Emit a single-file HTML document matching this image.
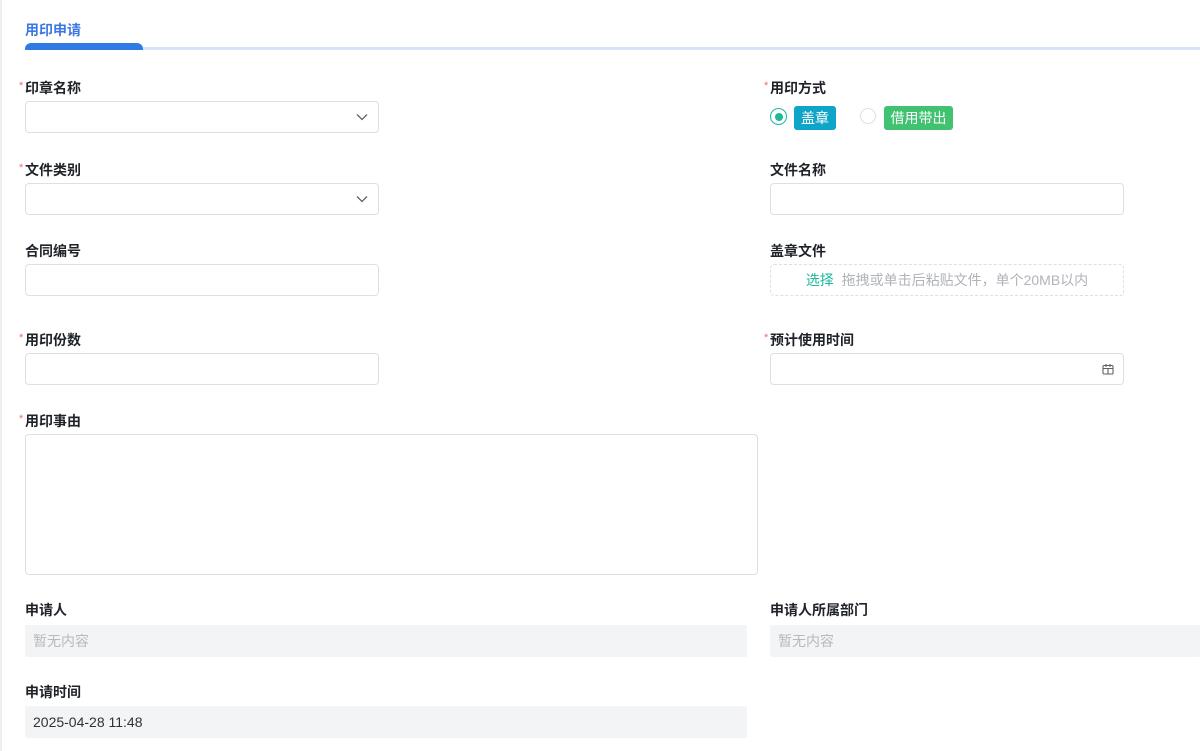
<!DOCTYPE html>
<html><head><meta charset="utf-8"><style>
*{box-sizing:border-box;margin:0;padding:0}
body{width:1200px;height:751px;background:#fff;position:relative;overflow:hidden;font-family:"Liberation Sans","Noto Sans CJK SC",sans-serif;font-size:14px;color:#1f2329}
.a{position:absolute}
.lb{position:absolute;font-weight:bold;font-size:14px;line-height:18px;color:#1f2329}
.lb i{font-style:normal;color:#f56c6c;font-weight:normal;position:absolute;left:-6px;top:-2px;font-size:11px}
.in{position:absolute;border:1px solid #dcdfe6;border-radius:4px;background:#fff}
.ro{position:absolute;background:#f3f4f6;border-radius:2px;color:#b6b9bf;font-size:14px;line-height:32px;padding-left:8px}
</style></head><body>
<div class="a" style="left:0;top:0;width:2px;height:751px;background:#eeeeee"></div>
<div class="a" style="left:25px;top:21px;color:#3c78e3;font-weight:bold;font-size:14px;line-height:18px">用印申请</div>
<div class="a" style="left:25px;top:47px;width:1175px;height:3px;background:#d6e4fa"></div>
<div class="a" style="left:25px;top:43px;width:118px;height:7px;background:#2f7ae5;border-radius:6px 6px 0 0"></div>

<div class="lb" style="left:25px;top:79px"><i>*</i>印章名称</div>
<div class="in" style="left:25px;top:101px;width:354px;height:32px"><svg class="a" style="right:10px;top:11px" width="12" height="8" viewBox="0 0 12 8"><path d="M1 1.5L6 6.5 11 1.5" fill="none" stroke="#606266" stroke-width="1.3"/></svg></div>

<div class="lb" style="left:770px;top:79px"><i>*</i>用印方式</div>
<div class="a" style="left:770px;top:108px;width:17px;height:17px;border:1px solid #1fb89a;border-radius:50%"><div class="a" style="left:3.5px;top:3.5px;width:8px;height:8px;border-radius:50%;background:#1fb89a"></div></div>
<div class="a" style="left:794px;top:106px;width:42px;height:24px;background:#0ea5c8;border-radius:3px;color:#fff;font-size:14px;line-height:24px;text-align:center">盖章</div>
<div class="a" style="left:860px;top:108px;width:16px;height:16px;border:1px solid #dcdfe6;border-radius:50%"></div>
<div class="a" style="left:884px;top:106px;width:69px;height:24px;background:#41c270;border-radius:3px;color:#fff;font-size:14px;line-height:24px;text-align:center">借用带出</div>

<div class="lb" style="left:25px;top:161px"><i>*</i>文件类别</div>
<div class="in" style="left:25px;top:183px;width:354px;height:32px"><svg class="a" style="right:10px;top:11px" width="12" height="8" viewBox="0 0 12 8"><path d="M1 1.5L6 6.5 11 1.5" fill="none" stroke="#606266" stroke-width="1.3"/></svg></div>
<div class="lb" style="left:770px;top:161px">文件名称</div>
<div class="in" style="left:770px;top:183px;width:354px;height:32px"></div>

<div class="lb" style="left:25px;top:242px">合同编号</div>
<div class="in" style="left:25px;top:264px;width:354px;height:32px"></div>
<div class="lb" style="left:770px;top:242px">盖章文件</div>
<div class="a" style="left:770px;top:264px;width:354px;height:32px;border:1px dashed #dcdfe6;border-radius:4px;text-align:center;line-height:30px;font-size:14px;color:#b0b3b8"><span style="color:#1fb89a">选择</span>&nbsp; 拖拽或单击后粘贴文件，单个20MB以内</div>

<div class="lb" style="left:25px;top:331px"><i>*</i>用印份数</div>
<div class="in" style="left:25px;top:353px;width:354px;height:32px"></div>
<div class="lb" style="left:770px;top:331px"><i>*</i>预计使用时间</div>
<div class="in" style="left:770px;top:353px;width:354px;height:32px"><svg class="a" style="left:331px;top:9px" width="12" height="12" viewBox="0 0 12 12"><rect x="1" y="2.5" width="10" height="8.5" rx="1" fill="none" stroke="#606266" stroke-width="1.1"/><path d="M4 1v3M8 1v3M1 5.5h10M6 5.5v5.5" stroke="#606266" stroke-width="1.1"/></svg></div>

<div class="lb" style="left:25px;top:412px"><i>*</i>用印事由</div>
<div class="in" style="left:25px;top:434px;width:733px;height:141px"></div>

<div class="lb" style="left:25px;top:601px">申请人</div>
<div class="ro" style="left:25px;top:625px;width:722px;height:32px">暂无内容</div>
<div class="lb" style="left:770px;top:601px">申请人所属部门</div>
<div class="ro" style="left:770px;top:625px;width:430px;height:32px">暂无内容</div>

<div class="lb" style="left:25px;top:683px">申请时间</div>
<div class="ro" style="left:25px;top:706px;width:722px;height:32px;color:#303133">2025-04-28 11:48</div>
</body></html>
